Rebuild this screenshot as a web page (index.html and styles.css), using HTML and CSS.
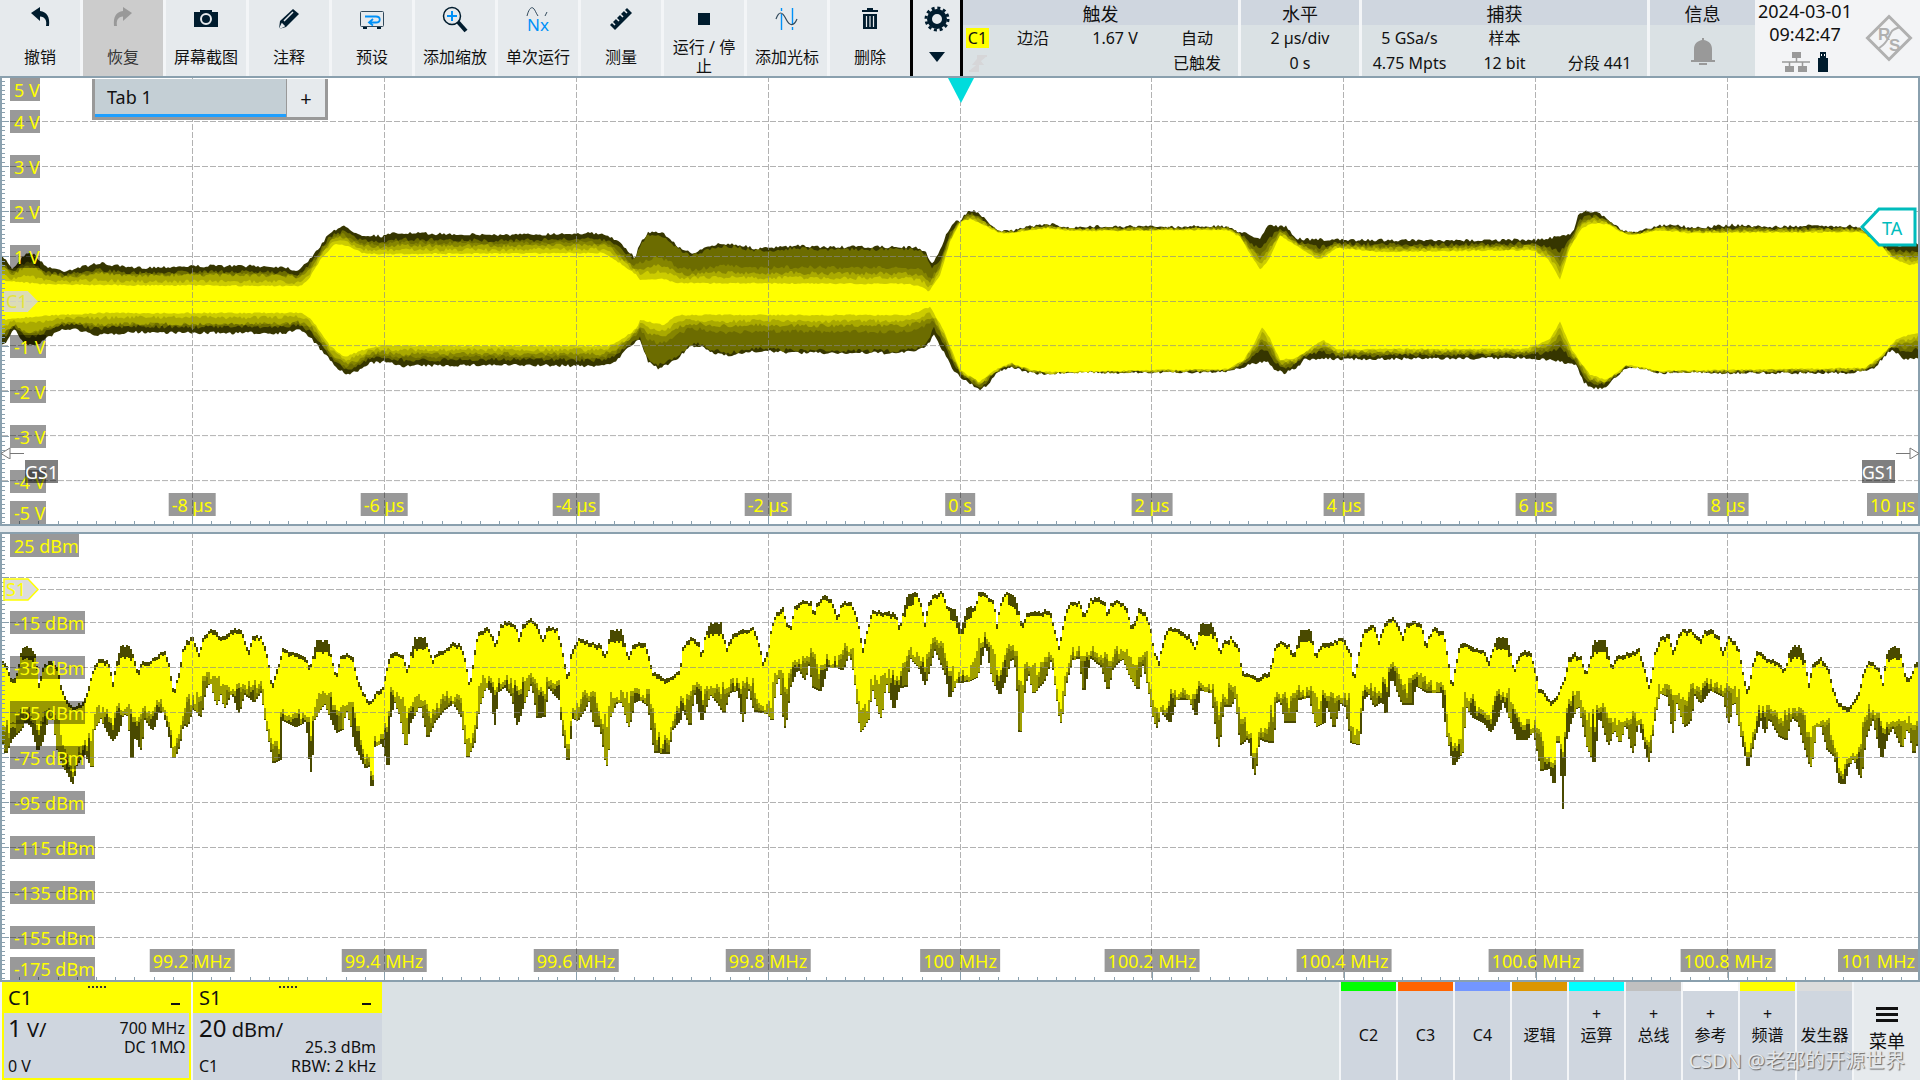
FILE: index.html
```html
<!DOCTYPE html>
<html lang="zh-CN">
<head>
<meta charset="utf-8">
<title>示波器</title>
<link rel="stylesheet" href="styles.css">
</head>
<body>
<header class="header">
  <nav class="tools">
    <button class="tool"><svg class="icon" width="30" height="30" viewBox="0 0 30 30"><path d="M6 9L15 3v4c7 1 10 6 9 15h-3c1-6-1-9-6-9.500V17z" fill="#001c2e"/></svg><span class="tool-text">撤销</span></button>
    <button class="tool off"><svg class="icon" width="30" height="30" viewBox="0 0 30 30"><path d="M24 9L15 3v4c-7 1-10 6-9 15h3c-1-6 1-9 6-9.500V17z" fill="#999"/></svg><span class="tool-text">恢复</span></button>
    <button class="tool"><svg class="icon" width="30" height="30" viewBox="0 0 30 30"><path d="M3 8h6V6h12v2h6v15H3z" fill="#001c2e"/><circle cx="15" cy="15" r="5" fill="none" stroke="#e6eaed" stroke-width="2"/></svg><span class="tool-text">屏幕截图</span></button>
    <button class="tool"><svg class="icon" width="30" height="30" viewBox="0 0 30 30"><path d="M5 25l1-8L19 5l6 5-13 13z" fill="#001c2e"/><path d="M10 17l9-9M6 24l2-4 2 2z" stroke="#e6eaed" stroke-width="1.500" fill="#e6eaed"/></svg><span class="tool-text">注释</span></button>
    <button class="tool"><svg class="icon" width="30" height="30" viewBox="0 0 30 30"><rect x="3.500" y="7.500" width="23" height="15" rx="1" fill="none" stroke="#324a5c"/><path d="M6 23h4v2H6zM20 23h4v2h-4z" fill="#001c2e"/><path d="M8 12.500h11c5 0 5 6 0 6h-6M16 15l-4 3.500 4 3" fill="none" stroke="#0091f8" stroke-width="1.800"/></svg><span class="tool-text">预设</span></button>
    <button class="tool"><svg class="icon" width="30" height="30" viewBox="0 0 30 30"><circle cx="12" cy="12" r="8.500" fill="none" stroke="#001c2e" stroke-width="1.500"/><path d="M18 18l8 9" stroke="#001c2e" stroke-width="4"/><path d="M12 7v10M7 12h10" stroke="#0091f8" stroke-width="2"/></svg><span class="tool-text">添加缩放</span></button>
    <button class="tool"><svg class="icon" width="30" height="30" viewBox="0 0 30 30"><path d="M4 12c2-8 5-10 7-7 1 1 2 4 4 7M22 12l2-4" fill="none" stroke="#324a5c"/><text x="4" y="27" class="nx">Nx</text></svg><span class="tool-text">单次运行</span></button>
    <button class="tool"><svg class="icon" width="30" height="30" viewBox="0 0 30 30"><path d="M4 21L21 4l5 5L9 26z" fill="#001c2e"/><path d="M6 18l3 3M10 14l3 3M14 10l3 3M18 6l3 3" stroke="#e6eaed" stroke-width="1.500"/></svg><span class="tool-text">测量</span></button>
    <button class="tool"><svg class="icon" width="30" height="30" viewBox="0 0 30 30"><path d="M9 9h12v12H9z" fill="#001c2e"/></svg><span class="tool-text">运行 / 停止</span></button>
    <button class="tool"><svg class="icon" width="30" height="30" viewBox="0 0 30 30"><path d="M9.500 4v3M9.500 10v16M20.500 4v16M20.500 23v3" stroke="#0091f8" stroke-width="1.400"/><path d="M4 15c3-8 6-8 10 0s8 7 11 0" fill="none" stroke="#324a5c" stroke-width="1.200"/></svg><span class="tool-text">添加光标</span></button>
    <button class="tool"><svg class="icon" width="30" height="30" viewBox="0 0 30 30"><path d="M7 6h5V4h6v2h5v2H7zM8 10h14v15H8z" fill="#001c2e"/><path d="M11.500 12v11M15 12v11M18.500 12v11" stroke="#e6eaed" stroke-width="1.200"/></svg><span class="tool-text">删除</span></button>
  </nav>
  <button class="gear" aria-label="设置">
    <svg width="26" height="26" viewBox="0 0 26 26"><circle cx="13" cy="13" r="7.500" fill="none" stroke="#001c2e" stroke-width="5"/><circle cx="13" cy="13" r="11" fill="none" stroke="#001c2e" stroke-width="3" stroke-dasharray="3 2.760"/></svg>
    <svg width="16" height="10" viewBox="0 0 16 10"><path d="M0 0h16L8 10z" fill="#001c2e"/></svg>
  </button>
  <div class="status">
    <section class="panel trigger">
      <h2 class="panel-title">触发</h2>
      <div class="cells trigger-cells">
        <span class="source">C1</span><span>边沿</span><span>1.67 V</span><span>自动</span>
        <svg width="20" height="20" viewBox="0 0 20 20"><path d="M1 18h9V3h9M6 11l4-5 4 5z" fill="#d6d6d8" stroke="#d6d6d8" stroke-width="2"/></svg><span></span><span></span><span>已触发</span>
      </div>
    </section>
    <section class="panel horizontal">
      <h2 class="panel-title">水平</h2>
      <div class="cells"><span>2 µs/div</span><span>0 s</span></div>
    </section>
    <section class="panel acquire">
      <h2 class="panel-title">捕获</h2>
      <div class="cells three"><span>5 GSa/s</span><span>样本</span><span></span><span>4.75 Mpts</span><span>12 bit</span><span>分段 441</span></div>
    </section>
    <section class="panel info">
      <h2 class="panel-title">信息</h2>
      <div class="bell"><svg width="26" height="28" viewBox="0 0 26 28"><path d="M12 0h2v2c5 1 8 4 8 9v11h3v2H1v-2h3V11c0-5 3-8 8-9zM9 25h8v2H9z" fill="#999"/></svg></div>
    </section>
  </div>
  <div class="clock">
    <div class="time">
      <span>2024-03-01</span><span>09:42:47</span>
      <div class="links">
        <svg width="28" height="20" viewBox="0 0 28 20"><path d="M10 0h9v6h-9zM3 14h9v6H3zM16 14h9v6h-9z" fill="#999"/><path d="M14.500 6v4M0 10h28M7.500 10v4M20.500 10v4" stroke="#999" stroke-width="1.500"/></svg>
        <svg width="10" height="20" viewBox="0 0 10 20"><path d="M2 0h6v6h2v14H0V6h2z" fill="#001c2e"/><path d="M3 2h1v2H3zM6 2h1v2H6z" fill="#fff"/></svg>
      </div>
    </div>
    <svg width="50" height="50" viewBox="0 0 50 50"><path d="M25 3.500L46.500 25 25 46.500 3.500 25z" fill="none" stroke="#b0b0b0" stroke-width="3"/><path d="M14 36l5-4c5-4 6-10 9-14 2-2 5-3 8-4" fill="none" stroke="#b0b0b0" stroke-width="2"/><text x="14" y="27" class="logo">R</text><text x="25" y="38" class="logo">S</text></svg>
  </div>
</header>

<main class="plots">
  <section class="plot" aria-label="C1">
    <svg class="canvas" id="wave" viewBox="0 76 1920 450" preserveAspectRatio="none"></svg>
    <span class="ylab first">5 V</span>
    <span class="ylab" style="top:10%">4 V</span>
    <span class="ylab" style="top:20%">3 V</span>
    <span class="ylab" style="top:30%">2 V</span>
    <span class="ylab" style="top:40%">1 V</span>
    <span class="ylab" style="top:60%">-1 V</span>
    <span class="ylab" style="top:70%">-2 V</span>
    <span class="ylab" style="top:80%">-3 V</span>
    <span class="ylab" style="top:90%">-4 V</span>
    <span class="ylab last">-5 V</span>
    <span class="xlab" style="left:10%">-8 µs</span>
    <span class="xlab" style="left:20%">-6 µs</span>
    <span class="xlab" style="left:30%">-4 µs</span>
    <span class="xlab" style="left:40%">-2 µs</span>
    <span class="xlab" style="left:50%">0 s</span>
    <span class="xlab" style="left:60%">2 µs</span>
    <span class="xlab" style="left:70%">4 µs</span>
    <span class="xlab" style="left:80%">6 µs</span>
    <span class="xlab" style="left:90%">8 µs</span>
    <span class="xlab end">10 µs</span>
    <span class="marker c1" style="top:50%">C1</span>
    <span class="segment left">GS1</span>
    <span class="segment right">GS1</span>
    <svg class="arrow left" width="24" height="12" viewBox="0 0 24 12"><path d="M24 6.500H10M10 1v11L1 6.500z" fill="#fff" stroke="#777"/></svg>
    <svg class="arrow right" width="24" height="12" viewBox="0 0 24 12"><path d="M0 6.500h14M14 1v11l9-5.500z" fill="#fff" stroke="#777"/></svg>
    <svg class="trigger-time" width="26" height="25" viewBox="0 0 26 25"><path d="M0 0h26L13 25z" fill="#00dcdc"/></svg>
    <div class="trigger-level"><svg width="57" height="40" viewBox="0 0 57 40"><path d="M2 20L19 2h36v36H19z" fill="#fff" stroke="#00bcbc" stroke-width="3"/></svg><span>TA</span></div>
    <div class="tabs"><button class="tab">Tab 1</button><button class="tab-add">+</button></div>
  </section>
  <section class="plot" aria-label="S1">
    <svg class="canvas" id="spectrum" viewBox="0 532 1920 450" preserveAspectRatio="none"></svg>
    <span class="ylab first">25 dBm</span>
    <span class="ylab" style="top:20%">-15 dBm</span>
    <span class="ylab" style="top:30%">-35 dBm</span>
    <span class="ylab" style="top:40%">-55 dBm</span>
    <span class="ylab" style="top:50%">-75 dBm</span>
    <span class="ylab" style="top:60%">-95 dBm</span>
    <span class="ylab" style="top:70%">-115 dBm</span>
    <span class="ylab" style="top:80%">-135 dBm</span>
    <span class="ylab" style="top:90%">-155 dBm</span>
    <span class="ylab last">-175 dBm</span>
    <span class="xlab" style="left:10%">99.2 MHz</span>
    <span class="xlab" style="left:20%">99.4 MHz</span>
    <span class="xlab" style="left:30%">99.6 MHz</span>
    <span class="xlab" style="left:40%">99.8 MHz</span>
    <span class="xlab" style="left:50%">100 MHz</span>
    <span class="xlab" style="left:60%">100.2 MHz</span>
    <span class="xlab" style="left:70%">100.4 MHz</span>
    <span class="xlab" style="left:80%">100.6 MHz</span>
    <span class="xlab" style="left:90%">100.8 MHz</span>
    <span class="xlab end">101 MHz</span>
    <span class="marker s1" style="top:12.7%"><svg width="36" height="23" viewBox="0 0 36 23"><path d="M1 1h24l10 10.500L25 22H1z" fill="#dcdcdc" stroke="#ff0" stroke-width="1.500"/></svg><span>S1</span></span>
  </section>
</main>

<footer class="footer">
  <section class="signal selected">
    <div class="signal-head"><span>C1</span><i class="dots"></i><i class="minus"></i></div>
    <div class="signal-body">
      <p class="scale"><b>1</b> V/</p>
      <p class="line1">700 MHz</p><p class="line2">DC 1MΩ</p><p class="offset">0 V</p>
    </div>
  </section>
  <section class="signal">
    <div class="signal-head"><span>S1</span><i class="dots"></i><i class="minus"></i></div>
    <div class="signal-body">
      <p class="scale"><b>20</b> dBm/</p>
      <p class="line2">25.3 dBm</p><p class="offset">C1</p><p class="line3">RBW: 2 kHz</p>
    </div>
  </section>
  <nav class="sources">
    <button class="src green"><span></span>C2</button>
    <button class="src orange"><span></span>C3</button>
    <button class="src blue"><span></span>C4</button>
    <button class="src amber"><span></span>逻辑</button>
    <button class="src cyan"><span>+</span>运算</button>
    <button class="src gray"><span>+</span>总线</button>
    <button class="src white"><span>+</span>参考</button>
    <button class="src yellow"><span>+</span>频谱</button>
    <button class="src pale"><span></span>发生器</button>
  </nav>
  <button class="menu"><svg width="22" height="15" viewBox="0 0 22 15"><path d="M0 0h22v3H0zM0 6h22v3H0zM0 12h22v3H0z" fill="#111"/></svg>菜单</button>
  <span class="credit">CSDN @老邵的开源世界</span>
</footer>
<script src="chart.js"></script>
</body>
</html>
```
FILE: styles.css
```css
* { box-sizing: border-box; }
body {
  margin: 0;
  min-height: 100vh;
  display: flex;
  flex-direction: column;
  background: #f3f5f7;
  color: #111;
  font: 16px/19px "Noto Sans", "Noto Sans CJK SC", sans-serif;
}
button {
  border: 0;
  padding: 0;
  background: #e6eaed;
  color: inherit;
  font: inherit;
}
p, h2 { margin: 0; font: inherit; }
svg { display: block; flex: none; }

/* header */
.header { display: flex; height: 76px; overflow: hidden; }
.tools {
  flex: 910 1 0;
  display: grid;
  grid-template-columns: repeat(11, minmax(0, 1fr));
  gap: 3px;
}
.tool { display: flex; flex-direction: column; align-items: center; padding: 4px 4px 0; }
.tool-text { flex: 1; display: flex; align-items: center; padding-top: 4px; }
.tool.off { background: #ccc; color: #333; }
.icon { overflow: visible; }
.nx { font-size: 17px; fill: #0091f8; }
.gear {
  flex: 47 1 6px;
  border: solid #000;
  border-width: 0 3px;
  display: flex;
  flex-direction: column;
  align-items: center;
  gap: 20px;
  padding-top: 6px;
}
.status { flex: 792 1 0; display: flex; gap: 3px; }
.panel { background: #dae1e4; min-width: 0; text-align: center; white-space: nowrap; }
.trigger { flex: 275 1 0; }
.horizontal { flex: 118 1 0; }
.acquire { flex: 285 1 0; }
.info { flex: 105 1 0; }
.panel-title { background: #cfd6df; height: 25px; font-size: 18px; line-height: 28px; }
.cells { display: grid; grid-auto-rows: 25px; line-height: 26px; }
.three { grid-template-columns: repeat(3, 1fr); }
.trigger-cells { grid-template-columns: 29px repeat(3, 1fr); justify-items: center; align-items: center; }
.source { background: #ff0; width: 23px; line-height: 20px; }
.bell { display: flex; justify-content: center; padding-top: 13px; }
.clock {
  flex: 156 1 9px;
  display: flex;
  align-items: center;
  justify-content: space-between;
  padding: 0 6px 0 3px;
  background: #f3f4f6;
}
.time {
  align-self: flex-start;
  display: flex;
  flex-direction: column;
  align-items: center;
  font-size: 18px;
  line-height: 23px;
}
.links { display: flex; gap: 8px; padding-top: 6px; }
.logo { font: bold 17px "Liberation Sans", sans-serif; fill: #b0b0b0; }

/* plots */
.plots { flex: 1; display: flex; flex-direction: column; gap: 6px; background: #e6eaed; }
.plot { flex: 1; min-height: 300px; position: relative; background: #fff; overflow: hidden; }
.plot::after { content: ""; position: absolute; inset: 0; border: 2px solid #8aa0ae; pointer-events: none; }
.canvas { position: absolute; inset: 0; width: 100%; height: 100%; }
.ylab, .xlab {
  position: absolute;
  height: 23px;
  background: rgba(0, 0, 0, .4);
  color: #ff0;
  font-size: 18px;
  line-height: 24px;
  white-space: nowrap;
}
.ylab { left: 10px; margin-top: -11px; padding: 0 0 0 4px; }
.ylab.first { top: 2px; margin-top: 0; }
.ylab.last { bottom: 2px; margin-top: 0; }
.xlab { bottom: 10px; padding: 0 3px; transform: translateX(-50%); }
.xlab.end { right: 2px; transform: none; }
.marker { position: absolute; font-size: 18px; line-height: 21px; color: #e4e43c; }
.c1 {
  left: 4px;
  width: 34px;
  margin-top: -10px;
  padding-left: 2px;
  background: rgba(214, 214, 214, .85);
  clip-path: polygon(0 0, 70% 0, 100% 50%, 70% 100%, 0 100%);
}
.s1 { left: 3px; margin-top: -11px; color: #ff0; }
.s1 span { position: absolute; left: 3px; top: 1px; }
.segment {
  position: absolute;
  bottom: 43px;
  height: 23px;
  background: rgba(0, 0, 0, .5);
  color: #fff;
  font-size: 18px;
  line-height: 24px;
}
.segment.left { left: 25px; }
.segment.right { right: 25px; }
.arrow { position: absolute; bottom: 67px; z-index: 1; }
.arrow.left { left: 0; }
.arrow.right { right: 0; }
.trigger-time { position: absolute; top: 2px; left: 50%; margin-left: -12px; }
.trigger-level { position: absolute; right: 3px; top: 29%; color: #00bcbc; font-size: 18px; line-height: 40px; }
.trigger-level span { position: absolute; left: 22px; top: 1px; }
.tabs {
  position: absolute;
  left: 92px;
  top: 3px;
  width: 236px;
  height: 41px;
  display: flex;
  border: 3px solid #999;
  border-top: 0;
  font-size: 18px;
}
.tab { flex: 1; padding: 2px 12px 0; text-align: left; background: #c4cfd5; border-bottom: 3px solid #1e9fff; }
.tab-add { width: 39px; border-left: 1px solid #999; font-size: 20px; }

/* footer */
.footer { position: relative; display: flex; gap: 2px; height: 98px; padding-left: 2px; background: #f3f5f7; }
.signal { width: 189px; display: flex; flex-direction: column; background: #cfd6df; }
.signal-head {
  position: relative;
  display: flex;
  justify-content: space-between;
  height: 31px;
  padding: 0 11px 0 6px;
  background: #ff0;
  font-size: 20px;
  line-height: 32px;
}
.dots { position: absolute; left: 86px; top: 4px; width: 18px; border-top: 2px dotted #333; }
.minus { width: 9px; height: 2px; margin-top: 21px; background: #111; }
.signal-body {
  flex: 1;
  display: grid;
  grid-template: repeat(3, 19px) / 1fr auto;
  padding: 6px 6px 0;
}
.selected .signal-body { border: solid #ff0; border-width: 0 2px 2px; padding: 6px 4px 0; }
.scale { grid-area: 1 / 1 / 3 / 2; font-size: 20px; line-height: 18px; }
.scale b { font-size: 24px; font-weight: 400; }
.line1 { grid-area: 1 / 2; text-align: right; }
.line2 { grid-area: 2 / 2; text-align: right; }
.line3 { grid-area: 3 / 2; text-align: right; }
.offset { grid-area: 3 / 1; }
.sources { flex: 1; display: flex; justify-content: flex-end; gap: 2px; }
.sources::before { content: ""; flex: 1; margin-left: -2px; background: #dae1e4; }
.src {
  width: 55px;
  display: flex;
  flex-direction: column;
  align-items: center;
  padding-top: 13px;
  background: #cfd6df;
  border-top: 9px solid;
  line-height: 24px;
  white-space: nowrap;
}
.src span { height: 19px; line-height: 20px; }
.green { border-color: #0f0; }
.orange { border-color: #ff6400; }
.blue { border-color: #7396ff; }
.amber { border-color: #dc9600; }
.cyan { border-color: #0ff; }
.gray { border-color: #c0c0c0; }
.white { border-color: #fff; }
.yellow { border-color: #ff0; }
.pale { border-color: #dcdcdc; }
.menu { width: 66px; display: flex; flex-direction: column; align-items: center; gap: 7px; padding-top: 25px; font-size: 18px; line-height: 24px; }
.credit {
  position: absolute;
  right: 15px;
  bottom: 7px;
  color: #e4e7ea;
  font-size: 20px;
  line-height: 24px;
  text-shadow: 1px 1px 1px #666;
}
```
FILE: chart.js
```js
// Key points are "x,y" pairs; both plots share one 1920 px wide coordinate space.
const parse = s => s.trim().split(/\s+/).map(p => p.split(',').map(Number));
const curve = s => {
  const k = parse(s);
  return x => {
    let i = 1;
    while (i < k.length - 1 && k[i][0] < x) i++;
    const [a, b] = [k[i - 1], k[i]];
    const t = Math.max(0, Math.min(1, (x - a[0]) / (b[0] - a[0])));
    return a[1] + (b[1] - a[1]) * t;
  };
};
let seed = 7;
const rnd = () => (seed = (seed * 16807) % 2147483647) / 2147483647;

const topOuter = curve(`0,254 6,260 13,269 18,262 27,252 35,255 45,266 63,271 82,267 98,263 131,268 192,266 253,266 286,267
296,271 306,263 318,250 329,233 342,226 355,232 363,235 382,236 396,233 449,234 510,235 588,233 604,235 612,237 624,247
635,258 640,243 648,233 656,231 664,234 681,249 691,253 701,250 718,244 734,244 758,249 795,246 824,247 901,247 918,248
926,253 932,263 938,255 946,235 954,222 960,221 969,210 975,211 985,219 999,231 1013,231 1032,226 1048,224 1073,228
1105,226 1171,227 1207,226 1228,227 1240,232 1260,238 1269,224 1277,226 1286,227 1296,239 1341,240 1386,240 1443,241
1484,240 1533,240 1558,237 1573,233 1578,215 1586,211 1598,212 1611,222 1623,231 1639,232 1656,226 1672,224 1692,228
1733,225 1770,227 1807,226 1851,226 1860,228 1872,237 1888,247 1892,246 1920,243`);
const topInner = curve(`0,280 40,284 102,285 302,286 310,277 322,257 335,244 347,246 363,253 380,254 604,253 620,263 637,275
640,280 664,279 677,283 909,284 922,287 929,292 940,275 950,242 960,223 969,219 979,222 999,233 1011,233 1048,228
1073,231 1228,230 1240,237 1252,257 1260,270 1269,260 1280,235 1292,243 1319,260 1337,248 1382,252 1533,250 1549,260
1560,280 1570,247 1582,228 1594,223 1607,224 1627,235 1639,234 1660,230 1688,233 1851,232 1864,233 1880,245 1892,258
1909,265 1920,263`);
const lowOuter = curve(`0,347 6,342 14,329 24,343 35,346 49,337 61,330 76,329 90,334 102,335 131,332 192,333 286,333 298,329
310,337 327,357 337,368 347,375 359,371 369,363 384,362 404,366 490,365 600,366 616,361 631,345 640,340 648,362 658,368
677,360 689,347 699,346 713,353 730,355 758,351 803,353 901,353 922,349 930,343 934,334 940,345 954,372 967,382 981,390
989,383 997,372 1011,367 1032,373 1048,374 1081,371 1113,373 1171,372 1228,372 1248,365 1267,361 1273,368 1284,373
1296,369 1304,359 1362,359 1525,358 1545,359 1576,365 1584,382 1592,388 1604,388 1615,378 1627,367 1639,367 1660,373
1688,372 1729,373 1851,373 1874,368 1884,357 1892,349 1904,360 1920,357`);
const lowInner = curve(`0,320 40,316 102,313 302,313 312,320 331,347 345,357 363,350 380,346 608,346 624,338 637,328 640,320
664,325 677,315 909,315 930,307 942,327 960,370 979,382 995,370 1011,363 1032,370 1048,372 1228,369 1244,360 1256,340
1262,327 1271,340 1280,360 1296,358 1323,340 1337,350 1382,349 1525,349 1549,340 1560,322 1572,350 1590,375 1607,380
1627,365 1660,371 1864,368 1880,357 1898,338 1920,332`);
// Depth of each shade between the outer (0) and the saturated (1) envelope.
const shades = [
  ['#363600', () => 0],
  ['#6c6c00', curve('0,.3 300,.3 312,.3 615,.3 645,.06 925,.06 940,.4 1920,.35')],
  ['#858500', curve('0,.42 300,.42 312,.45 615,.45 645,.56 925,.56 940,.6 1920,.5')],
  ['#aaaa00', curve('0,.46 300,.46 312,.6 615,.6 645,.72 925,.72 940,.7 1920,.65')],
  ['#cccc00', curve('0,.78 300,.78 312,.8 615,.8 645,.84 925,.84 940,.85 1920,.82')],
  ['#ffff00', () => 1],
];

function grid(top, lines, extra) {
  const rows = lines.map(n => `M2 ${top + 45 * n + .5}H1918`).join('') + extra;
  let cols = '', ticks = '';
  for (let i = 1; i < 10; i++) cols += `M${192 * i + (i > 5 ? -.5 : .5)} ${top}V${top + 448}`;
  for (let i = 1; i < 100; i++) {
    ticks += `M${Math.round(19.2 * i) + .5} ${top + 448}v${i % 10 ? -3 : -8}`;
    ticks += `M2 ${Math.round(top + 4.5 * i) + .5}h${i % 10 ? 3 : 7}`;
  }
  return `<path d="${rows + cols}" fill="none" stroke="#888" stroke-opacity=".65" stroke-dasharray="6 2"/>
    <path d="${ticks}" fill="none" stroke="#8aa0ae"/>`;
}

let wave = '';
for (const [color, depth] of shades) {
  const up = [], down = [];
  for (let x = 0; x <= 1920; x += 2) {
    const d = depth(x), n = d === 0 ? 3 : d === 1 ? 1.5 : 4;
    const a = topOuter(x), b = lowOuter(x);
    up.push(`${x} ${(a + (topInner(x) - a) * d + (rnd() - .5) * n).toFixed(1)}`);
    down.unshift(`${x} ${(b + (lowInner(x) - b) * d + (rnd() - .5) * n).toFixed(1)}`);
  }
  wave += `<path d="M${up.concat(down).join('L')}z" fill="${color}"/>`;
}
document.getElementById('wave').innerHTML = wave + grid(76, [1, 2, 3, 4, 5, 6, 7, 8, 9].map(n => n - (n > 5 ? .02 : 0)), '');

// The upper edge of the spectrum is symmetric about the centre frequency.
const half = curve(`0,662 5,662 10,677 15,678 20,653 22,647 31,647 35,657 38,683 42,667 51,660 57,670 61,690 67,702 73,707
82,703 88,687 92,670 96,662 100,658 108,663 112,683 116,660 119,647 129,645 133,658 137,673 141,662 151,660 159,653
164,651 168,663 173,693 178,673 182,650 186,641 192,637 196,647 199,654 202,637 210,629 216,631 220,638 224,637 231,629
241,631 245,645 248,650 252,635 261,638 266,653 271,687 276,670 282,649 294,653 304,656 309,668 313,653 315,641 327,641
330,655 335,675 340,657 347,653 352,658 355,673 361,690 369,702 376,692 382,688 385,670 390,653 396,651 403,657 407,673
410,653 414,638 424,638 428,650 432,660 437,651 445,649 453,643 461,645 465,663 469,687 473,657 477,633 486,627 492,637
495,645 499,625 508,620 515,625 518,637 522,625 527,618 536,623 542,640 547,625 557,630 562,653 567,680 570,653 578,637
588,642 600,645 605,657 610,630 621,630 627,657 632,645 640,642 645,645 648,657 652,672 664,678 679,672 682,648 689,637
698,642 701,655 705,633 709,623 720,623 723,638 726,648 731,636 742,630 753,627 758,642 762,662 767,650 770,630 775,613
782,608 786,622 790,625 794,607 803,600 811,603 813,617 816,603 823,596 831,600 837,617 841,602 850,602 855,612 858,627
862,647 867,627 871,610 883,612 894,613 899,627 903,607 907,594 916,593 921,607 924,623 927,603 934,594 942,592 946,607
954,608 960,630`);
const specTop = x => half(x > 960 ? 1920 - x : x);
const specLow = curve(`0,730 5,753 10,740 20,730 24,720 31,727 37,750 42,740 46,720 53,720 57,750 63,767 67,773 72,784 74,767
84,753 91,767 93,730 100,717 106,730 112,741 118,730 122,712 128,717 131,758 134,730 140,750 143,717 152,730 157,713
163,712 167,727 173,758 178,747 182,723 186,727 192,707 200,717 204,690 210,680 216,705 220,690 224,708 231,690 238,713
243,693 253,702 261,690 265,720 273,763 279,760 281,720 286,723 296,727 306,720 310,772 313,720 324,702 336,733 341,730
345,705 351,727 355,747 365,768 367,747 371,786 373,747 382,743 387,765 389,717 394,700 400,717 405,745 409,723 420,703
427,737 433,723 443,710 453,703 461,717 467,757 473,743 478,707 485,685 491,693 494,725 496,693 504,687 512,697 516,725
524,700 531,680 537,718 543,717 547,687 559,700 562,730 567,760 571,717 576,721 584,710 588,697 594,727 600,727 606,766
609,717 616,702 622,703 628,727 633,703 640,700 648,707 654,753 667,754 671,730 679,720 682,707 689,725 693,687 701,720
709,693 717,703 723,713 728,693 738,690 742,722 747,683 754,712 767,714 771,720 774,687 779,673 784,728 789,687 797,667
804,680 808,660 813,688 820,691 826,667 836,668 842,670 849,650 854,675 860,732 867,720 871,683 880,718 885,677 893,708
898,688 905,687 909,657 920,670 924,685 934,647 940,663 946,677 949,697 955,683 967,682 976,677 985,640 992,680 999,694
1005,677 1011,653 1016,670 1019,732 1023,693 1027,668 1033,693 1044,680 1051,655 1056,693 1060,723 1064,687 1071,660
1079,658 1083,690 1089,657 1101,667 1107,689 1111,670 1122,657 1130,677 1137,689 1142,660 1148,687 1152,713 1156,728
1159,710 1169,722 1175,700 1189,700 1195,715 1199,690 1211,693 1218,747 1222,707 1230,707 1235,693 1240,745 1248,737
1254,775 1258,737 1264,742 1272,743 1275,703 1280,700 1285,723 1293,723 1297,700 1309,697 1316,727 1323,723 1326,700
1333,727 1339,703 1345,707 1351,743 1358,745 1362,700 1368,693 1374,707 1382,700 1385,713 1390,673 1402,705 1411,705
1414,685 1427,693 1441,693 1447,737 1453,765 1462,752 1464,703 1472,717 1484,723 1490,732 1496,720 1502,700 1511,723
1517,740 1525,740 1533,730 1541,771 1549,768 1553,783 1555,743 1560,743 1562,809 1564,743 1570,720 1578,703 1587,747
1593,762 1598,710 1608,745 1613,727 1619,742 1625,720 1632,753 1637,718 1643,740 1648,762 1652,727 1658,693 1668,697
1672,733 1675,697 1684,727 1690,720 1693,693 1700,703 1709,690 1723,697 1728,723 1733,693 1741,737 1747,766 1753,740
1760,717 1764,733 1768,717 1779,737 1785,740 1790,717 1798,723 1804,747 1810,767 1815,727 1821,727 1827,750 1834,757
1839,783 1843,784 1847,767 1853,757 1860,778 1864,740 1872,717 1881,757 1886,737 1892,727 1901,747 1907,723 1913,753
1920,727`);
// Peaks whose crest is only rarely reached, drawn dark.
const crests = [[21, 33], [118, 131], [314, 328], [412, 425], [609, 623], [708, 721], [903, 912], [950, 959]];
// Frequencies where the trace stays saturated almost down to its lowest value.
const nulls = [73, 173, 271, 369, 469, 567, 664, 762, 862, 1060, 1156, 1254, 1358, 1453, 1551, 1648, 1747, 1845];
const tone = { dark: '', mid: '', light: '', full: '' };
const bar = (x, a, b) => b > a ? `M${x} ${Math.round(a)}h2V${Math.round(b)}h-2z` : '';
const peak = (x, r) => { let v = 0; for (let d = -r; d <= r; d++) v = Math.max(v, specLow(x + d)); return v; };
let shade = 'dark', left = 0;
for (let x = 0; x < 1920; x += 2) {
  if (left-- <= 0) {
    const r = rnd();
    shade = r < .35 ? 'dark' : r < .75 ? 'mid' : 'light';
    left = 1 + Math.floor(rnd() * 4);
  }
  const m = x > 960 ? 1920 - x : x;
  const a = specTop(x) + (rnd() - .5) * 3, b = peak(x, 1);
  let near = b;
  for (let d = -6; d <= 6; d += 2) near = Math.min(near, specLow(x + d));
  const cap = crests.some(c => m >= c[0] && m <= c[1]) ? 12 : 3 + rnd() * 2;
  const deep = nulls.some(n => Math.abs(n - x) < 9);
  const fill = deep ? .72 + rnd() * .16 : .48 + rnd() * .24;
  const end = Math.min(b - 3, Math.max(near - 1 - rnd() * 12, a + (b - a) * fill));
  tone.dark += bar(x, a, a + cap) + bar(x, b - 2, b);
  tone[shade] += bar(x, end - 2, b - 1);
  tone.light += bar(x, end - 2, Math.min(end + 5, b));
  tone.full += bar(x, a + cap, end);
}
document.getElementById('spectrum').innerHTML =
  `<g shape-rendering="crispEdges"><path d="${tone.mid}" fill="#777700"/><path d="${tone.dark}" fill="#4a4a00"/>
  <path d="${tone.light}" fill="#a0a000"/><path d="${tone.full}" fill="#ffff00"/></g>` +
  grid(532, [1, 2, 3, 4, 5, 6, 7, 8, 9], 'M40 589.5H1918');
```
